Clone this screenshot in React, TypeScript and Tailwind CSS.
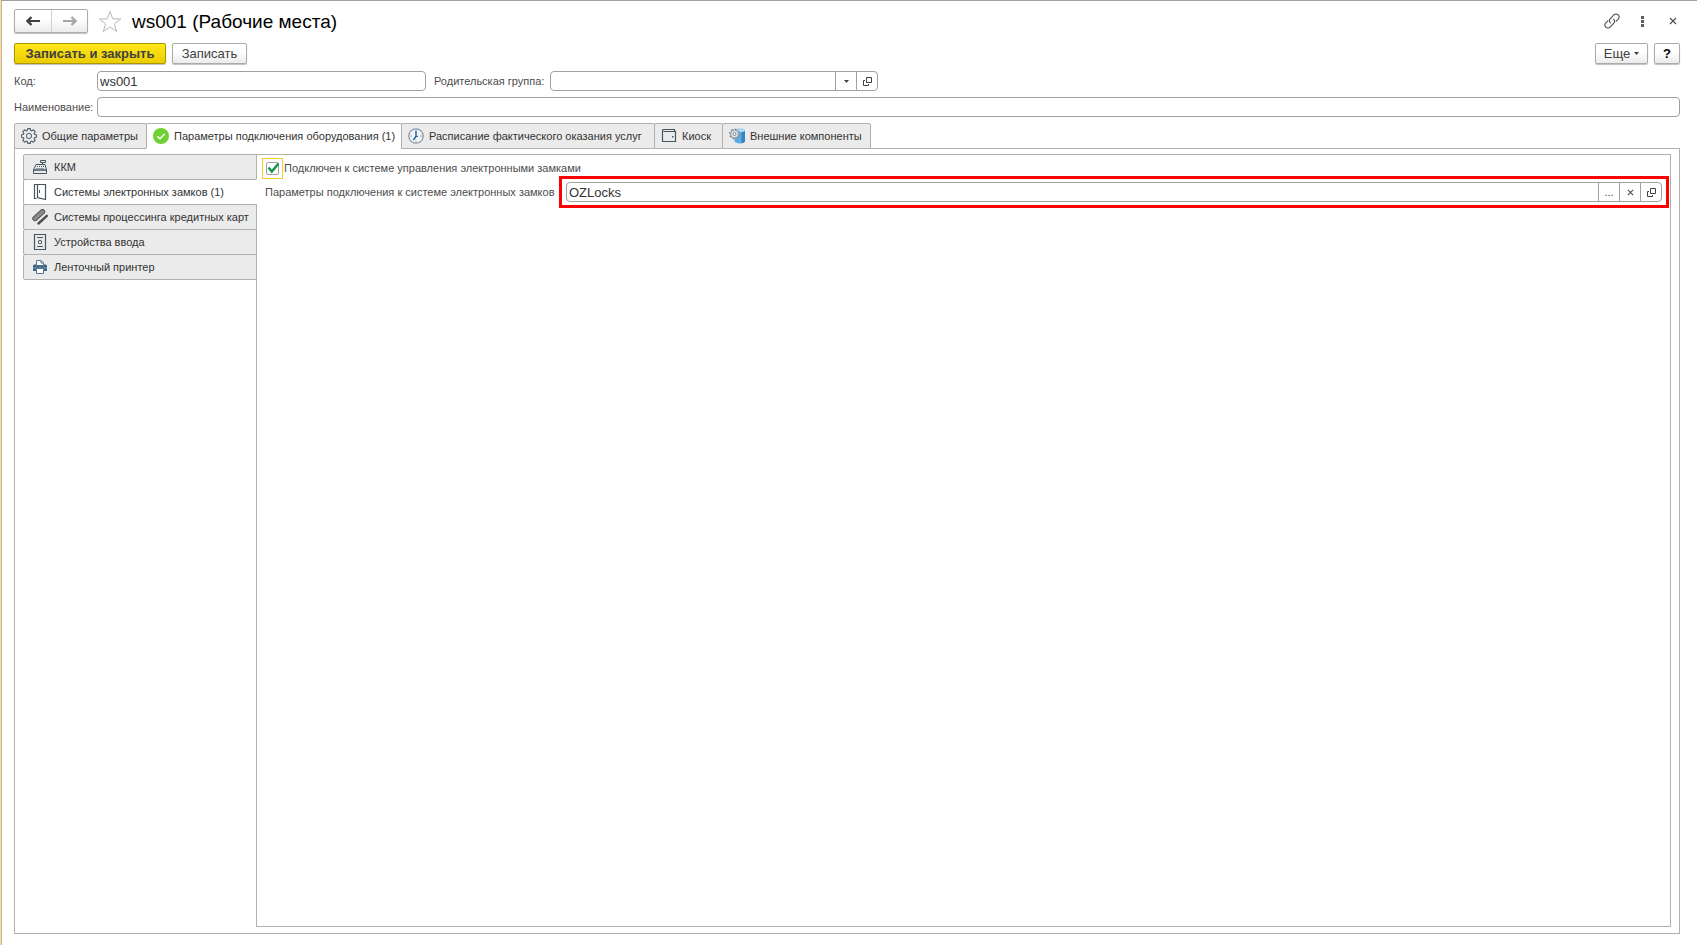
import { useState } from "react";
import type { ReactNode } from "react";
import clsx from "clsx";

const raised =
  "border border-[#ababab] bg-linear-to-b from-white from-40% to-[#ebebeb] shadow-[0_1px_1px_rgba(0,0,0,0.25)]";
const field = "h-5 min-w-0 border border-[#a0a0a0] bg-white text-[13px] text-[#333333] outline-none";
const label = "shrink-0 text-[11px] text-[#4d4d4d]";

function GearIcon() {
  return (
    <svg viewBox="0 0 16 16" className="size-4" fill="none" stroke="#4b5b64" aria-hidden="true">
      <path
        strokeWidth="1.1"
        strokeLinejoin="round"
        d="M6.7.6h2.6l.4 1.9 1 .4 1.6-1.1 1.9 1.9-1.1 1.6.4 1 1.9.4v2.6l-1.9.4-.4 1 1.1 1.6-1.9 1.9-1.6-1.1-1 .4-.4 1.9H6.7l-.4-1.9-1-.4-1.6 1.1-1.9-1.9 1.1-1.6-.4-1-1.900-.4V6.700l1.900-.4.4-1-1.100-1.600 1.900-1.900 1.600 1.100 1-.4z"
      />
      <circle cx="8" cy="8" r="2.6" />
    </svg>
  );
}

function CheckCircleIcon() {
  return (
    <svg viewBox="0 0 16 16" className="size-4" aria-hidden="true">
      <circle cx="8" cy="8" r="8" fill="#6fd136" />
      <path d="M4.2 8.2 7 10.8l4.8-5" fill="none" stroke="#fff" strokeWidth="1.3" />
    </svg>
  );
}

function ClockIcon() {
  return (
    <svg viewBox="0 0 16 16" className="size-4" fill="none" aria-hidden="true">
      <circle cx="8" cy="8" r="7.2" fill="#eef4f8" stroke="#8c99a3" strokeWidth="1.3" />
      <path d="M8 2.5v6L5.3 12" stroke="#1e5f96" strokeWidth="1.4" />
      <path d="M7 8.4h3" stroke="#1e5f96" />
      <path d="M2.5 8h1.2M12.4 8h1.2M8 12.6v1" stroke="#d35450" />
    </svg>
  );
}

function WalletIcon() {
  return (
    <svg viewBox="0 0 16 16" className="size-4" fill="none" stroke="#435660" aria-hidden="true">
      <path strokeWidth="1.2" d="M13.5 3.5V1.5h-11a1 1 0 0 0-1 1v11h13v-10h-12" />
      <path d="M11 8h1.500v1.500H11z" fill="#435660" stroke="none" />
    </svg>
  );
}

function ComponentIcon() {
  return (
    <svg viewBox="0 0 16 16" className="size-4" aria-hidden="true">
      <path d="M5.500 2.500C5.500 1.300 8 .8 10.800.8s5.200.5 5.200 1.700V13c0 1.300-2.300 2.500-5.200 2.500S5.500 14.300 5.500 13z" fill="#5aace2" />
      <path d="M12.500 4c1.800-.2 3.500-.7 3.500-1.500V13c0 1.100-1.500 2-3.500 2.300z" fill="#3583c1" />
      <ellipse cx="10.800" cy="2.500" rx="5" ry="1.500" fill="#b5dcf5" />
      <circle cx="5.500" cy="6" r="4.700" fill="none" stroke="#8c959b" strokeWidth="1.600" strokeDasharray="2 1.600" />
      <circle cx="5.500" cy="6" r="4" fill="#e4e8ea" stroke="#8c959b" />
      <circle cx="5.500" cy="6" r="1.500" fill="#fff" stroke="#7c868c" />
    </svg>
  );
}

function RegisterIcon() {
  return (
    <svg viewBox="0 0 16 16" className="size-4" fill="none" stroke="#435660" aria-hidden="true">
      <path d="M8.500 1.500h5v2h-5zM10.500 3.500v2M4 5.500h9l1.500 5.500h-13zM1.500 11v3.500h13V11z" />
      <path strokeDasharray="1 1" d="M5 7.500h7M4.500 9.500h8" />
    </svg>
  );
}

function DoorIcon() {
  return (
    <svg viewBox="0 0 16 16" className="size-4" fill="none" stroke="#435660" aria-hidden="true">
      <path strokeWidth="1.2" d="M4.500 14.500h-2V.5h11v15l-8-2V.5" />
      <path d="M7.500 6v3" />
    </svg>
  );
}

function CardsIcon() {
  return (
    <svg viewBox="0 0 16 16" className="size-4" fill="none" strokeLinecap="round" aria-hidden="true">
      <path d="M3 9.500 10.500 2.800" stroke="#4d4d4d" strokeWidth="5.4" />
      <path d="M3 9.500 10.500 2.800" stroke="#8a8a8a" strokeWidth="3.6" />
      <path d="M6.500 14.500 14.800 6.800" stroke="#4d4d4d" strokeWidth="2.4" />
    </svg>
  );
}

function DeviceIcon() {
  return (
    <svg viewBox="0 0 16 16" className="size-4" fill="none" stroke="#435660" aria-hidden="true">
      <path strokeWidth="1.2" d="M2.500.5h11v15h-11z" />
      <path d="M5 3.500h6M5 12.500h6" />
      <circle cx="8" cy="8" r="1.7" />
    </svg>
  );
}

function PrinterIcon() {
  return (
    <svg viewBox="0 0 16 16" className="size-4" aria-hidden="true">
      <path d="M2 5.500h12l1 1V12H1V6.500z" fill="#3f6286" />
      <path d="M1 9h14" stroke="#7895b0" />
      <path d="M4.500 6.500v-5H9L11.500 4v2.500z" fill="#fff" stroke="#5a7890" />
      <path d="M4.500 9.500h7v5h-7z" fill="#fff" stroke="#5a7890" />
      <path d="M9 1.500V4h2.500" fill="none" stroke="#5a7890" />
    </svg>
  );
}

function OpenIcon() {
  return (
    <svg viewBox="0 0 9 9" className="size-[9px]" fill="none" stroke="#404040" aria-hidden="true">
      <path d="M3.500.5h5v5h-5zM2 3.500H.5v5h5V7" />
    </svg>
  );
}

function CrossIcon({ small }: { small?: boolean }) {
  return (
    <svg viewBox="0 0 8 8" className={small ? "size-[7px]" : "size-2"} stroke="#4d4d4d" strokeWidth="1.2" aria-hidden="true">
      <path d="m1 1 6 6M7 1 1 7" />
    </svg>
  );
}

function CaretIcon() {
  return (
    <svg viewBox="0 0 5 3" className="h-[3px] w-[5px]" fill="#404040" aria-hidden="true">
      <path d="M0 0h5L2.500 3z" />
    </svg>
  );
}

function ArrowIcon({ back }: { back?: boolean }) {
  return (
    <svg
      viewBox="0 0 14 10"
      className={clsx("h-[10px] w-[14px]", back ? "text-[#404040]" : "rotate-180 text-[#a6a6a6]")}
      fill="none"
      stroke="currentColor"
      strokeWidth="2"
      aria-hidden="true"
    >
      <path d="M14 5H2" />
      <path d="M5.500 1 1.500 5l4 4" strokeWidth="2.4" />
    </svg>
  );
}

function StarIcon() {
  return (
    <svg viewBox="0 0 24 23" className="h-[23px] w-6" fill="#fff" stroke="#b3bac0" aria-hidden="true">
      <path d="m12 1.500 2.700 7.300 8 .2-6.300 4.800 2.300 7.700-6.700-4.500-6.700 4.500 2.300-7.700L1.300 9l8-.2z" />
    </svg>
  );
}

function LinkIcon() {
  return (
    <svg viewBox="0 0 16 16" className="size-4" fill="none" stroke="#4d4d4d" strokeWidth="1.1" strokeLinecap="round" aria-hidden="true">
      <path d="M6.500 9.800a3 3 0 0 1-.2-4.200l3.600-3.700a3 3 0 0 1 4.300 0 3 3 0 0 1 0 4.200l-2 2" />
      <path d="M9.500 6.200a3 3 0 0 1 .2 4.200l-3.600 3.700a3 3 0 0 1-4.300 0 3 3 0 0 1 0-4.200l2-2" />
    </svg>
  );
}

const tabs: [string, string, ReactNode][] = [
  ["Общие параметры", "w-[133px]", <GearIcon />],
  ["Параметры подключения оборудования (1)", "w-[256px]", <CheckCircleIcon />],
  ["Расписание фактического оказания услуг", "w-[254px]", <ClockIcon />],
  ["Киоск", "w-[69px]", <WalletIcon />],
  ["Внешние компоненты", "w-[149px]", <ComponentIcon />],
];

const sections: [string, ReactNode][] = [
  ["ККМ", <RegisterIcon />],
  ["Системы электронных замков (1)", <DoorIcon />],
  ["Системы процессинга кредитных карт", <CardsIcon />],
  ["Устройства ввода", <DeviceIcon />],
  ["Ленточный принтер", <PrinterIcon />],
];

function FieldButton({ title, last, children }: { title: string; last?: boolean; children: ReactNode }) {
  return (
    <button
      type="button"
      aria-label={title}
      className={clsx(
        "-ml-px flex h-5 w-[22px] shrink-0 items-center justify-center border border-[#a0a0a0] bg-white text-[11px] text-[#404040]",
        last && "rounded-r",
      )}
    >
      {children}
    </button>
  );
}

export default function App() {
  const [tab, setTab] = useState(1);
  const [section, setSection] = useState(1);
  const [connected, setConnected] = useState(true);

  return (
    <div className="flex h-screen border-l border-[#fbdca8] bg-white font-['Liberation_Sans',Arial,sans-serif]">
      <main className="flex min-w-0 flex-1 flex-col border-t border-l border-t-[#a0a0a0] border-l-[#c4b393] pt-2 pr-[17px] pb-[11px] pl-3">
        <header className="flex h-6 items-center">
          <div className={clsx("flex h-6 rounded-xs", raised)}>
            <button type="button" aria-label="Назад" className="flex w-9 items-center justify-center">
              <ArrowIcon back />
            </button>
            <button type="button" aria-label="Вперед" className="flex w-9 items-center justify-center border-l border-[#d0d0d0]">
              <ArrowIcon />
            </button>
          </div>
          <button type="button" aria-label="В избранное" className="ml-[10px]">
            <StarIcon />
          </button>
          <h1 className="ml-[10px] pt-px text-[19px] leading-6 text-black">ws001 (Рабочие места)</h1>
          <div className="ml-auto flex items-center gap-[14px] pr-[3px]">
            <button type="button" aria-label="Получить ссылку">
              <LinkIcon />
            </button>
            <button type="button" aria-label="Дополнительно" className="flex w-4 justify-center">
              <svg viewBox="0 0 3 11" className="h-[11px] w-[3px]" fill="#5c5c5c" aria-hidden="true">
                <path d="M0 0h3v3H0zM0 4h3v3H0zM0 8h3v3H0z" />
              </svg>
            </button>
            <button type="button" aria-label="Закрыть" className="ml-[5px]">
              <CrossIcon />
            </button>
          </div>
        </header>

        <div className="mt-[10px] flex text-[13px] leading-4 text-[#404040]">
          <button
            type="button"
            className="h-[21px] w-[152px] rounded-xs border border-[#ab9600] bg-linear-to-b from-[#ffe81a] to-[#ebcd00] font-bold shadow-[0_1px_1px_rgba(0,0,0,0.25)]"
          >
            Записать и закрыть
          </button>
          <button type="button" className={clsx("ml-[6px] h-[21px] w-[75px] rounded-xs", raised)}>
            Записать
          </button>
          <button type="button" className={clsx("ml-auto flex h-[21px] w-[53px] items-center justify-center gap-1 rounded-xs", raised)}>
            Еще <CaretIcon />
          </button>
          <button type="button" aria-label="Справка" className={clsx("ml-[6px] h-[21px] w-[26px] rounded-xs font-bold text-black", raised)}>
            ?
          </button>
        </div>

        <div className="mt-[7px] flex items-center">
          <label htmlFor="code" className={clsx(label, "w-[83px]")}>Код:</label>
          <input id="code" defaultValue="ws001" className={clsx(field, "w-[329px] rounded px-[2px]")} />
          <label htmlFor="parent" className={clsx(label, "ml-2 w-[116px]")}>Родительская группа:</label>
          <div className="relative flex">
            <select id="parent" className={clsx(field, "w-[307px] appearance-none rounded-l")}>
              <option />
            </select>
            <span className="pointer-events-none absolute inset-y-0 right-0 flex w-[22px] items-center justify-center border-l border-[#a0a0a0]">
              <CaretIcon />
            </span>
          </div>
          <FieldButton title="Открыть группу" last>
            <OpenIcon />
          </FieldButton>
        </div>

        <div className="mt-[6px] flex items-center">
          <label htmlFor="name" className={clsx(label, "w-[83px]")}>Наименование:</label>
          <input id="name" className={clsx(field, "flex-1 rounded px-[2px]")} />
        </div>

        <div role="tablist" className="z-10 mt-[6px] flex">
          {tabs.map(([title, width, icon], i) => (
            <button
              key={title}
              type="button"
              role="tab"
              aria-selected={i === tab}
              onClick={() => setTab(i)}
              className={clsx(
                "-mb-px flex h-[26px] items-center gap-[5px] rounded-t-xs border border-[#b0b0b0] pl-[6px] text-[11px] whitespace-nowrap text-[#333333]",
                width,
                i > 0 && "-ml-px",
                i === tab ? "border-b-white bg-white" : "bg-[#ebebeb]",
              )}
            >
              {icon}
              {title}
            </button>
          ))}
        </div>

        <section className="flex min-h-0 flex-1 border border-[#b0b0b0] px-2 pt-[5px] pb-[6px]">
          <div role="tablist" aria-orientation="vertical" className="z-10 -mr-px w-[234px] shrink-0">
            {sections.map(([title, icon], i) => (
              <button
                key={title}
                type="button"
                role="tab"
                aria-selected={i === section}
                onClick={() => setSection(i)}
                className={clsx(
                  "-mb-px flex h-[26px] w-full items-center gap-[6px] rounded-l-xs border border-[#b0b0b0] pl-2 text-[11px] whitespace-nowrap text-[#333333]",
                  i === section ? "border-r-white bg-white" : "bg-[#ebebeb]",
                )}
              >
                {icon}
                {title}
              </button>
            ))}
          </div>

          <div className="min-w-0 flex-1 border border-[#b0b0b0] px-2 pt-[3px]">
            <div className="-ml-[3px] flex h-[21px] items-center">
              <span className="relative flex size-[21px] items-center justify-center border border-[#f5c92d]">
                <input
                  id="connected"
                  type="checkbox"
                  checked={connected}
                  onChange={(e) => setConnected(e.target.checked)}
                  className="size-[13px] appearance-none rounded-xs border border-[#a0a0a0] bg-white outline-none"
                />
                {connected && (
                  <svg viewBox="0 0 12 12" className="pointer-events-none absolute size-3" fill="none" stroke="#12964f" strokeWidth="2.4" aria-hidden="true">
                    <path d="m1.500 4.500 3.300 4L11.500.5" />
                  </svg>
                )}
              </span>
              <label htmlFor="connected" className={clsx(label, "ml-px")}>
                Подключен к системе управления электронными замками
              </label>
            </div>

            <div className="mt-[3px] flex items-center">
              <label htmlFor="params" className={clsx(label, "w-[301px]")}>
                Параметры подключения к системе электронных замков
              </label>
              <div className="relative flex min-w-0 flex-1">
                <input id="params" defaultValue="OZLocks" className={clsx(field, "flex-1 rounded-l px-[2px]")} />
                <FieldButton title="Выбрать">...</FieldButton>
                <FieldButton title="Очистить">
                  <CrossIcon small />
                </FieldButton>
                <FieldButton title="Открыть" last>
                  <OpenIcon />
                </FieldButton>
                <span className="pointer-events-none absolute -inset-x-[7px] -inset-y-[6px] border-3 border-[#ff0000]" />
              </div>
            </div>
          </div>
        </section>
      </main>
    </div>
  );
}
